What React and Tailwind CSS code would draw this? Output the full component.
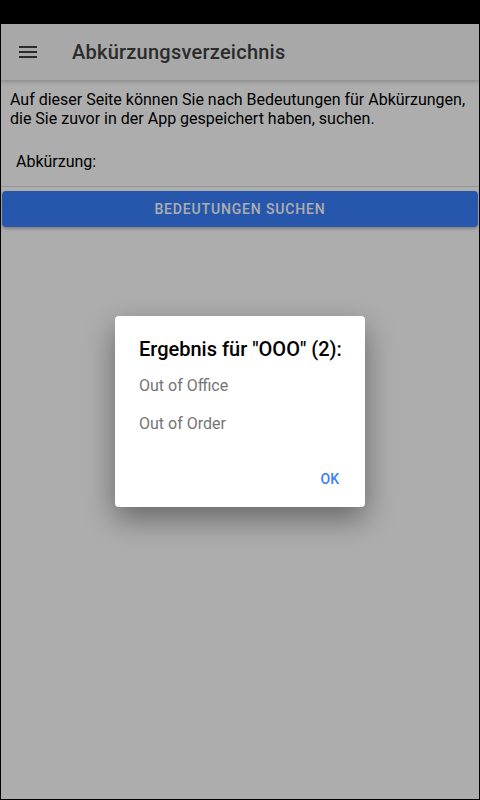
import React from "react";

export default function App() {
  return (
    <div className="w-[480px] h-[800px] bg-black pt-[24px] px-[1px] pb-[1px] flex flex-col" style={{ fontFamily: "Roboto, 'Liberation Sans', sans-serif" }}>
      <div className="relative flex-1 bg-white flex flex-col overflow-hidden">
        {/* App bar */}
        <div className="h-[56px] flex items-center bg-[#f8f8f8] shadow-[0_2px_4px_rgba(0,0,0,0.2)] relative z-10">
          <div className="w-[71px] flex items-center pl-[15px]">
            <svg width="24" height="24" viewBox="0 0 24 24" fill="#424242">
              <rect x="3" y="6" width="18" height="2" />
              <rect x="3" y="11" width="18" height="2" />
              <rect x="3" y="16" width="18" height="2" />
            </svg>
          </div>
          <div className="text-[20px] font-medium text-[#424242] leading-none tracking-[0.012em]">Abkürzungsverzeichnis</div>
        </div>
        {/* Content */}
        <div className="pt-[10px] px-[9px] text-[16px] leading-[19px] text-black">
          Auf dieser Seite können Sie nach Bedeutungen für Abkürzungen, die Sie zuvor in der App gespeichert haben, suchen.
        </div>
        <div className="mt-[24px] h-[35px] flex items-start pl-[15px] border-b border-[#dedede] text-[16px] text-black leading-[19px]">
          Abkürzung:
        </div>
        <div className="px-[1px] mt-[4px]">
          <div className="h-[36px] rounded-[4px] bg-[#3880ff] flex items-center justify-center text-white text-[14px] font-medium tracking-[0.06em] shadow-[0_2px_3px_rgba(0,0,0,0.25)]">
            BEDEUTUNGEN SUCHEN
          </div>
        </div>
        {/* Overlay */}
        <div className="absolute inset-0 z-20 bg-[rgba(0,0,0,0.32)] flex items-center justify-center">
          <div className="w-[250px] h-[191px] bg-white rounded-[4px] shadow-[0_12px_30px_rgba(0,0,0,0.4)] flex flex-col">
            <div className="pt-[21px] pl-[24px] text-[20px] font-medium text-black leading-[24px] whitespace-nowrap">
              Ergebnis für "OOO" (2):
            </div>
            <div className="px-[24px] mt-[15px] flex flex-col gap-[19px] text-[16px] text-[#757575] leading-[19px]">
              <div>Out of Office</div>
              <div>Out of Order</div>
            </div>
            <div className="flex-1" />
            <div className="flex justify-end px-[26px] pb-[20px]">
              <div className="text-[14px] font-medium text-[#3880ff] leading-[16px]">OK</div>
            </div>
          </div>
        </div>
      </div>
    </div>
  );
}
